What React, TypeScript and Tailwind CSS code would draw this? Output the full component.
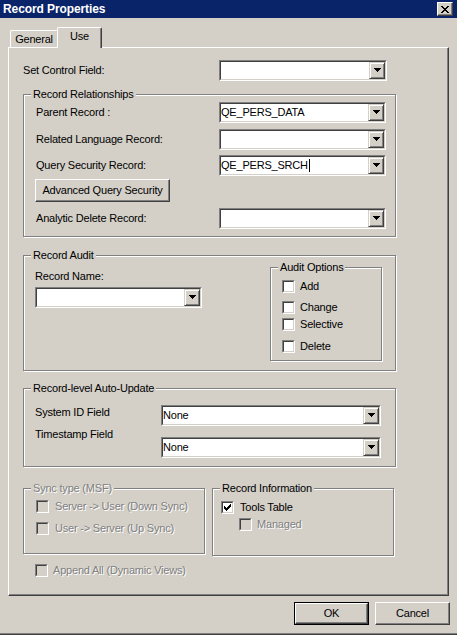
import React from "react"

// pixel glyphs, drawn 1px per cell like the classic Windows ones
const X_GLYPH = ["11000011", "01100110", "00111100", "00011000", "00111100", "01100110", "11000011"]
const CHECK_GLYPH = ["0000001", "0000011", "1000111", "1101110", "1111100", "0111000", "0010000"]
const ARROW_GLYPH = ["1111111", "0111110", "0011100", "0001000"]

function Pixels({ rows, color = "#000" }: { rows: string[]; color?: string }) {
  const w = rows[0].length
  const h = rows.length
  return (
    <svg width={w} height={h} viewBox={`0 0 ${w} ${h}`} shapeRendering="crispEdges">
      {rows.flatMap((r, y) =>
        r.split("").map((c, x) =>
          c === "1" ? <rect key={`${x}-${y}`} x={x} y={y} width="1" height="1" fill={color} /> : null
        )
      )}
    </svg>
  )
}

const disabledText = "text-[#808080] [text-shadow:1px_1px_0_#fff]"

function Combo({ value, className, caret }: { value?: string; className: string; caret?: boolean }) {
  return (
    <div className={`flex h-[21px] shrink-0 border border-t-[#808080] border-l-[#808080] border-b-white border-r-white ${className}`}>
      <div className="flex flex-1 border border-t-[#404040] border-l-[#404040] border-b-[#d4d0c8] border-r-[#d4d0c8] bg-white">
        <div className="flex flex-1 items-center overflow-hidden">
          <span className="whitespace-nowrap">{value}</span>
          {caret && <span className="ml-[1px] h-[13px] w-px bg-black" />}
        </div>
        <div className="flex w-[16px] items-center justify-center border border-t-[#d4d0c8] border-l-[#d4d0c8] border-b-[#404040] border-r-[#404040] bg-[#d4d0c8] pb-[1px] shadow-[inset_1px_1px_0_#fff,inset_-1px_-1px_0_#808080]">
          <Pixels rows={ARROW_GLYPH} />
        </div>
      </div>
    </div>
  )
}

function Check({ checked, disabled }: { checked?: boolean; disabled?: boolean }) {
  return (
    <span className="flex h-[13px] w-[13px] shrink-0 border border-t-[#808080] border-l-[#808080] border-b-white border-r-white">
      <span
        className={`flex flex-1 items-center justify-center border border-t-[#404040] border-l-[#404040] border-b-[#d4d0c8] border-r-[#d4d0c8] ${
          disabled ? "bg-[#d4d0c8]" : "bg-white"
        }`}
      >
        {checked && <Pixels rows={CHECK_GLYPH} />}
      </span>
    </span>
  )
}

function CheckRow({
  label,
  checked,
  disabled,
  className,
}: {
  label: string
  checked?: boolean
  disabled?: boolean
  className: string
}) {
  return (
    <div className={`flex items-center ${className}`}>
      <Check checked={checked} disabled={disabled} />
      <span className={`whitespace-nowrap ${disabled ? disabledText : ""}`}>{label}</span>
    </div>
  )
}

function Group({
  label,
  disabled,
  className,
  children,
}: {
  label: string
  disabled?: boolean
  className: string
  children: React.ReactNode
}) {
  return (
    <div className={`flex shrink-0 flex-col border border-[#808080] shadow-[inset_1px_1px_0_#fff,1px_1px_0_#fff] ${className}`}>
      <span className={`-mt-[7px] ml-[7px] self-start whitespace-nowrap bg-[#d4d0c8] px-[2px] leading-[13px] ${disabled ? disabledText : ""}`}>
        {label}
      </span>
      {children}
    </div>
  )
}

function PushButton({ label, isDefault, className }: { label: string; isDefault?: boolean; className: string }) {
  return (
    <div className={`flex shrink-0 ${isDefault ? "border border-black" : ""} ${className}`}>
      <div className="flex flex-1 items-center justify-center border border-t-white border-l-white border-b-[#404040] border-r-[#404040] shadow-[inset_-1px_-1px_0_#808080]">
        {label}
      </div>
    </div>
  )
}

export default function App() {
  return (
    <div className="flex h-[635px] w-[457px] flex-col overflow-hidden bg-[#d4d0c8] text-[11px] leading-[13px] tracking-[-0.2px] text-black [font-family:'Liberation_Sans',Arial,sans-serif]">
      {/* title bar */}
      <div className="flex h-[18px] shrink-0 items-center justify-between bg-[#0a246a] pl-[3px] pr-[4px]">
        <span className="text-[12px] font-bold tracking-[-0.1px] text-white">Record Properties</span>
        <div className="flex h-[14px] w-[16px] items-center justify-center border border-t-white border-l-white border-b-[#404040] border-r-[#404040] bg-[#d4d0c8] shadow-[inset_-1px_-1px_0_#808080]">
          <Pixels rows={X_GLYPH} />
        </div>
      </div>

      {/* tabs */}
      <div className="mt-[9px] flex shrink-0 items-end pl-[10px]">
        <div className="flex h-[17px] w-[48px] justify-center rounded-t-[2px] border-t border-l border-r border-t-white border-l-white border-r-[#404040] pt-[2px]">
          General
        </div>
        <div className="relative z-10 -mb-px -ml-px flex h-[21px] w-[45px] justify-center rounded-t-[2px] border-t border-l border-r border-t-white border-l-white border-r-[#404040] bg-[#d4d0c8] pt-[2px] shadow-[inset_-1px_0_0_#808080]">
          Use
        </div>
      </div>

      {/* tab panel */}
      <div className="ml-[8px] flex h-[549px] w-[441px] shrink-0 flex-col border border-t-white border-l-white border-b-[#404040] border-r-[#404040] pl-[14px] shadow-[inset_-1px_-1px_0_#808080]">
        <div className="mt-[12px] flex w-[373px] items-center justify-between pr-[9px]">
          <span>Set Control Field:</span>
          <Combo className="w-[168px]" />
        </div>

        <Group label="Record Relationships" className="mt-[13px] w-[373px] pb-[7px]">
          <div className="mt-[1px] flex items-center justify-between pl-[12px] pr-[9px]">
            <span>Parent Record :</span>
            <Combo className="w-[167px]" value="QE_PERS_DATA" />
          </div>
          <div className="mt-[6px] flex items-center justify-between pl-[12px] pr-[9px]">
            <span>Related Language Record:</span>
            <Combo className="w-[167px]" />
          </div>
          <div className="mt-[5px] flex items-center justify-between pl-[12px] pr-[9px]">
            <span>Query Security Record:</span>
            <Combo className="w-[167px]" value="QE_PERS_SRCH" caret />
          </div>
          <div className="mt-[3px] flex pl-[11px]">
            <PushButton label="Advanced Query Security" className="h-[23px] w-[135px]" />
          </div>
          <div className="mt-[6px] flex items-center justify-between pl-[12px] pr-[9px]">
            <span>Analytic Delete Record:</span>
            <Combo className="w-[167px]" />
          </div>
        </Group>

        <Group label="Record Audit" className="mt-[18px] w-[373px]">
          <div className="flex items-start justify-between pb-[9px] pl-[11px] pr-[13px]">
            <div className="flex flex-col">
              <span className="mt-[8px]">Record Name:</span>
              <Combo className="mt-[4px] w-[167px]" />
            </div>
            <Group label="Audit Options" className="mt-[5px] w-[112px] pb-[7px]">
              <CheckRow label="Add" className="mt-[6px] gap-[5px] pl-[11px]" />
              <CheckRow label="Change" className="mt-[8px] gap-[5px] pl-[11px]" />
              <CheckRow label="Selective" className="mt-[4px] gap-[5px] pl-[11px]" />
              <CheckRow label="Delete" className="mt-[9px] gap-[5px] pl-[11px]" />
            </Group>
          </div>
        </Group>

        <Group label="Record-level Auto-Update" className="mt-[17px] w-[373px]">
          <div className="flex items-start justify-between pb-[8px] pl-[11px] pr-[14px]">
            <div className="flex flex-col">
              <span className="mt-[11px]">System ID Field</span>
              <span className="mt-[9px]">Timestamp Field</span>
            </div>
            <div className="flex flex-col">
              <Combo className="mt-[10px] w-[220px]" value="None" />
              <Combo className="mt-[11px] w-[220px]" value="None" />
            </div>
          </div>
        </Group>

        <div className="mt-[21px] flex items-start gap-[7px]">
          <Group label="Sync type (MSF)" disabled className="h-[66px] w-[182px]">
            <CheckRow label="Server -> User (Down Sync)" disabled className="mt-[5px] gap-[6px] pl-[12px]" />
            <CheckRow label="User -> Server (Up Sync)" disabled className="mt-[9px] gap-[6px] pl-[12px]" />
          </Group>
          <Group label="Record Information" className="h-[68px] w-[182px]">
            <CheckRow label="Tools Table" checked className="mt-[6px] gap-[6px] pl-[8px]" />
            <CheckRow label="Managed" disabled className="mt-[4px] gap-[5px] pl-[26px]" />
          </Group>
        </div>

        <CheckRow label="Append All (Dynamic Views)" disabled className="ml-[12px] mt-[8px] gap-[5px]" />
      </div>

      {/* dialog buttons */}
      <div className="mt-[6px] flex shrink-0 justify-end gap-[6px] pr-[7px]">
        <PushButton label="OK" isDefault className="h-[23px] w-[75px]" />
        <PushButton label="Cancel" className="h-[23px] w-[75px]" />
      </div>

      <div className="flex-1" />
      <div className="h-px shrink-0 bg-[#808080]" />
      <div className="h-px shrink-0 bg-[#404040]" />
    </div>
  )
}
